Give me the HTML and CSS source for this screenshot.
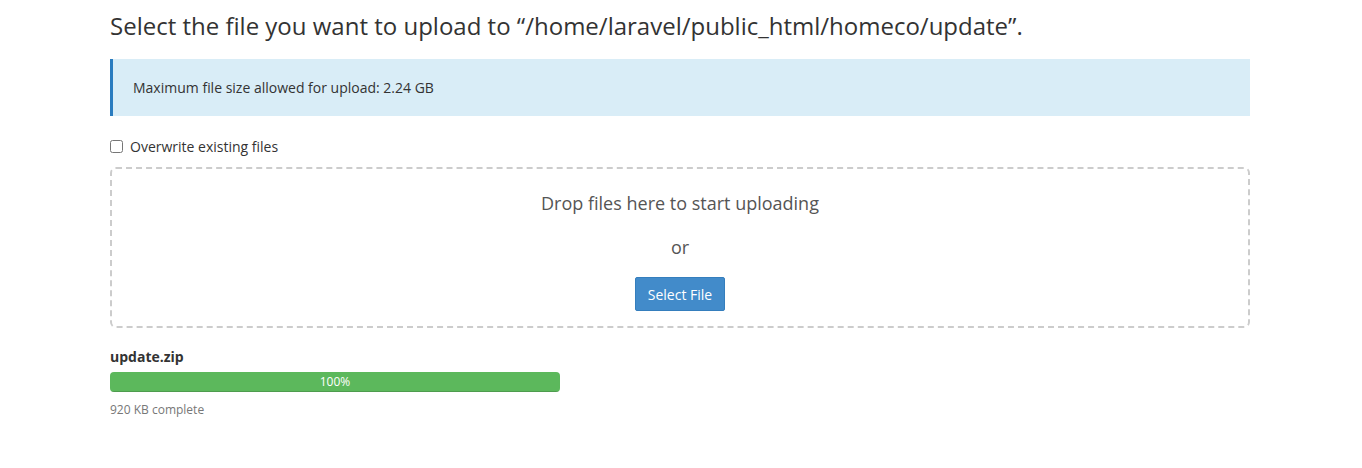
FILE: index.html
```html
<!DOCTYPE html>
<html>
<head>
<meta charset="utf-8">
<link rel="stylesheet" href="styles.css">
</head>
<body>
<div class="page">
  <h1 class="title">Select the file you want to upload to “/home/laravel/public_html/homeco/update”.</h1>
  <div class="alert">Maximum file size allowed for upload: 2.24 GB</div>
  <label class="check"><input type="checkbox" class="check-box"><span>Overwrite existing files</span></label>
  <div class="dropzone">
    <div class="drop-text">Drop files here to start uploading</div>
    <div class="drop-or">or</div>
    <button class="btn">Select File</button>
  </div>
  <div class="upload">
    <div class="upload-name">update.zip</div>
    <div class="progress"><div class="progress-bar" style="width:100%">100%</div></div>
    <div class="upload-status">920 KB complete</div>
  </div>
</div>
</body>
</html>
```
FILE: styles.css
```css
html, body { margin: 0; padding: 0; background: #fff; }
body { font-family: "Open Sans", "Liberation Sans", sans-serif; color: #333; }
.page { width: 1140px; margin-left: 110px; padding-top: 9px; }
.title { font-size: 24px; font-weight: 400; margin: 0; line-height: 34px; color: #333; }
.alert { margin-top: 16px; height: 57px; box-sizing: border-box; background: #d9edf7; border-left: 3px solid #2a7cbf; padding: 0 20px; display: flex; align-items: center; font-size: 14px; color: #333; }
.check { display: flex; align-items: center; margin-top: 20px; font-size: 14px; color: #333; height: 20px; }
.check-box { margin: 0 7px 0 0; width: 13px; height: 13px; }
.dropzone { margin-top: 11px; height: 161px; box-sizing: border-box; border: 2px dashed #ccc; border-radius: 6px; display: flex; flex-direction: column; align-items: center; }
.drop-text { margin-top: 22px; font-size: 18px; line-height: 24px; color: #555; }
.drop-or { margin-top: 20px; font-size: 18px; line-height: 24px; color: #555; }
.btn { margin-top: 18px; width: 90px; height: 34px; background: #428bca; border: 1px solid #357ebd; border-radius: 2px; color: #fff; font-family: inherit; font-size: 14px; padding: 0; }
.upload { margin-top: 19px; }
.upload-name { font-size: 14px; font-weight: 700; line-height: 20px; color: #333; }
.progress { margin-top: 5px; width: 450px; height: 20px; background: #f5f5f5; border-radius: 4px; overflow: hidden; }
.progress-bar { height: 100%; background: #5cb85c; color: #fff; font-size: 12px; line-height: 20px; text-align: center; box-shadow: inset 0 -1px 0 rgba(0,0,0,.15); }
.upload-status { margin-top: 9px; font-size: 12px; line-height: 18px; color: #777; }
```
